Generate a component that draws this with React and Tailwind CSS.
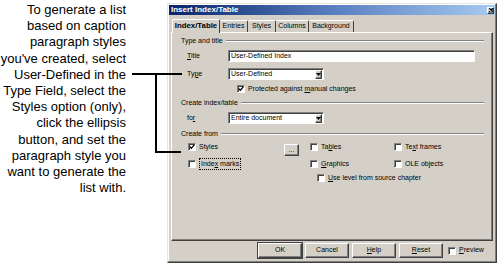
import React from "react";

const raised =
  "bg-[#d4d0c8] border border-white border-r-[#404040] border-b-[#404040] shadow-[inset_-1px_-1px_0_#808080]";
const sunken =
  "bg-white border border-[#808080] border-r-white border-b-white shadow-[inset_1px_1px_0_#404040]";

function U({ t, i }) {
  return (
    <>
      {t.slice(0, i)}
      <span className="underline underline-offset-[1px]">{t[i]}</span>
      {t.slice(i + 1)}
    </>
  );
}

function Box({ on }) {
  return (
    <span className={`w-[8px] h-[8px] shrink-0 flex items-center justify-center ${sunken}`}>
      {on && (
        <svg width="6" height="6" viewBox="0 0 6 6">
          <path d="M0.8 2.6 L2.3 4.3 L5.3 0.9" stroke="#000" strokeWidth="1.3" fill="none" />
        </svg>
      )}
    </span>
  );
}

function Check({ on, children, focus }) {
  return (
    <div className="flex items-center gap-[3px] h-full">
      <Box on={on} />
      <span className={focus ? "border border-dotted border-black px-[1px] leading-[10px]" : ""}>
        {children}
      </span>
    </div>
  );
}

function Drop({ text }) {
  return (
    <div className={`w-[96px] h-[12px] flex items-center ${sunken}`}>
      <span className="flex-1 pl-[2px] whitespace-nowrap">{text}</span>
      <span className={`w-[7px] h-[9px] mr-[1px] flex items-center justify-center ${raised}`}>
        <svg width="5" height="3" viewBox="0 0 5 3">
          <path d="M0 0 H5 L2.5 3 Z" fill="#000" />
        </svg>
      </span>
    </div>
  );
}

function Group({ label, className }) {
  return (
    <div className={`h-[12px] flex items-center pl-[9px] pr-[8px] ${className}`}>
      <span className="whitespace-nowrap">{label}</span>
      <span className="flex-1 ml-[3px] h-[2px] border-t border-[#808080] border-b border-b-white" />
    </div>
  );
}

function Btn({ children, def, className }) {
  return (
    <div
      className={`w-[44px] h-[15px] flex items-center justify-center ${raised} ${
        def ? "outline outline-1 outline-[#404040]" : ""
      } ${className || ""}`}
    >
      {children}
    </div>
  );
}

export default function App() {
  const tabs = [
    ["Entries", "w-[28px]"],
    ["Styles", "w-[28px]"],
    ["Columns", "w-[33px]"],
    ["Background", "w-[45px]"],
  ];

  return (
    <div className="relative w-[500px] h-[265px] bg-white flex font-['Liberation_Sans',Arial,sans-serif] overflow-hidden">
      {/* caption */}
      <div className="w-[126px] shrink-0 pt-[2px] text-right text-[13px] leading-[16.2px] text-black">
        <p>To generate a list</p>
        <p>based on caption</p>
        <p>paragraph styles</p>
        <p>you've created, select</p>
        <p>User-Defined in the</p>
        <p>Type Field, select the</p>
        <p>Styles option (only),</p>
        <p>click the ellipsis</p>
        <p>button, and set the</p>
        <p>paragraph style you</p>
        <p>want to generate the</p>
        <p>list with.</p>
      </div>

      {/* dialog */}
      <div className="ml-[41px] mt-[3px] w-[330px] h-[260px] bg-[#d4d0c8] border border-[#e8e6e0] border-r-[#404040] border-b-[#404040] p-[1px] shadow-[inset_-1px_-1px_0_#808080,inset_1px_1px_0_#fff] flex flex-col text-[7px] text-black">
        <div className="h-[10px] bg-linear-to-r from-[#0a246a] via-[#5a7fc0] to-[#a6caf0] flex items-center justify-between pl-[2px] pr-[1px]">
          <span className="text-white font-bold text-[8px] leading-none">Insert Index/Table</span>
          <span className={`w-[7px] h-[7px] flex items-center justify-center ${raised}`}>
            <svg width="4" height="4" viewBox="0 0 4 4">
              <path d="M0 0 L4 4 M4 0 L0 4" stroke="#000" strokeWidth="1.1" />
            </svg>
          </span>
        </div>

        {/* tabs */}
        <div className="mt-[4px] ml-[3px] h-[14px] flex items-end relative z-10">
          <div className="w-[48px] h-[14px] bg-[#d4d0c8] border-t border-l border-white border-r border-r-[#404040] rounded-t-[2px] flex items-center justify-center pb-[1px] font-bold text-[7.8px]">
            Index/Table
          </div>
          {tabs.map(([t, w]) => (
            <div
              key={t}
              className={`${w} h-[12px] mb-[1px] border-t border-white border-r border-r-[#404040] rounded-t-[2px] flex items-center justify-center`}
            >
              {t}
            </div>
          ))}
        </div>

        {/* panel */}
        <div className="-mt-[1px] mx-[2px] h-[209px] border border-white border-r-[#404040] border-b-[#404040] shadow-[inset_-1px_-1px_0_#808080] flex flex-col">
          <Group label="Type and title" className="mt-[2px]" />
          <div className="mt-[3px] h-[12px] flex items-center pl-[15px]">
            <span className="w-[41px]">
              <U t="Title" i={0} />
            </span>
            <div className={`w-[247px] h-[12px] flex items-center pl-[2px] ${sunken}`}>User-Defined Index</div>
          </div>
          <div className="mt-[6px] h-[12px] flex items-center pl-[15px]">
            <span className="w-[41px]">
              <U t="Type" i={2} />
            </span>
            <Drop text="User-Defined" />
          </div>
          <div className="mt-[4px] h-[10px] pl-[65px]">
            <Check on>
              Protected against <U t="manual" i={0} /> changes
            </Check>
          </div>
          <Group label="Create index/table" className="mt-[3px]" />
          <div className="mt-[3px] h-[12px] flex items-center pl-[15px]">
            <span className="w-[41px]">
              <U t="for" i={2} />
            </span>
            <Drop text="Entire document" />
          </div>
          <Group label="Create from" className="mt-[4px]" />

          <div className="mt-[2px] h-[10px] flex pl-[16px]">
            <div className="w-[96px]">
              <Check on>Styles</Check>
            </div>
            <div className="w-[26px]">
              <div className={`w-[15px] h-[12px] mt-[2px] flex items-center justify-center ${raised}`}>
                ...
              </div>
            </div>
            <div className="w-[84px]">
              <Check>
                <U t="Tables" i={2} />
              </Check>
            </div>
            <Check>
              <U t="Text frames" i={2} />
            </Check>
          </div>
          <div className="mt-[7px] h-[10px] flex pl-[16px]">
            <div className="w-[122px]">
              <Check focus>
                <U t="Index marks" i={4} /> 
              </Check>
            </div>
            <div className="w-[84px]">
              <Check>
                <U t="Graphics" i={0} />
              </Check>
            </div>
            <Check>OLE objects</Check>
          </div>
          <div className="mt-[4px] h-[10px] pl-[145px]">
            <Check>
              <U t="Use level from source chapter" i={0} />
            </Check>
          </div>
        </div>

        {/* buttons */}
        <div className="mt-[2px] h-[15px] flex items-center pl-[89px]">
          <Btn def>OK</Btn>
          <Btn className="ml-[3px]">Cancel</Btn>
          <Btn className="ml-[3px]">
            <U t="Help" i={0} />
          </Btn>
          <Btn className="ml-[3px]">
            <U t="Reset" i={0} />
          </Btn>
          <div className="ml-[5px] flex items-center gap-[3px]">
            <Box />
            <span>
              <U t="Preview" i={0} />
            </span>
          </div>
        </div>
      </div>

      {/* callout bracket */}
      <div className="absolute left-[132px] top-[73px] w-[50px] h-[2px] bg-black" />
      <div className="absolute left-[155px] top-[73px] w-[2px] h-[80px] bg-black" />
      <div className="absolute left-[155px] top-[151px] w-[26px] h-[2px] bg-black" />
    </div>
  );
}
